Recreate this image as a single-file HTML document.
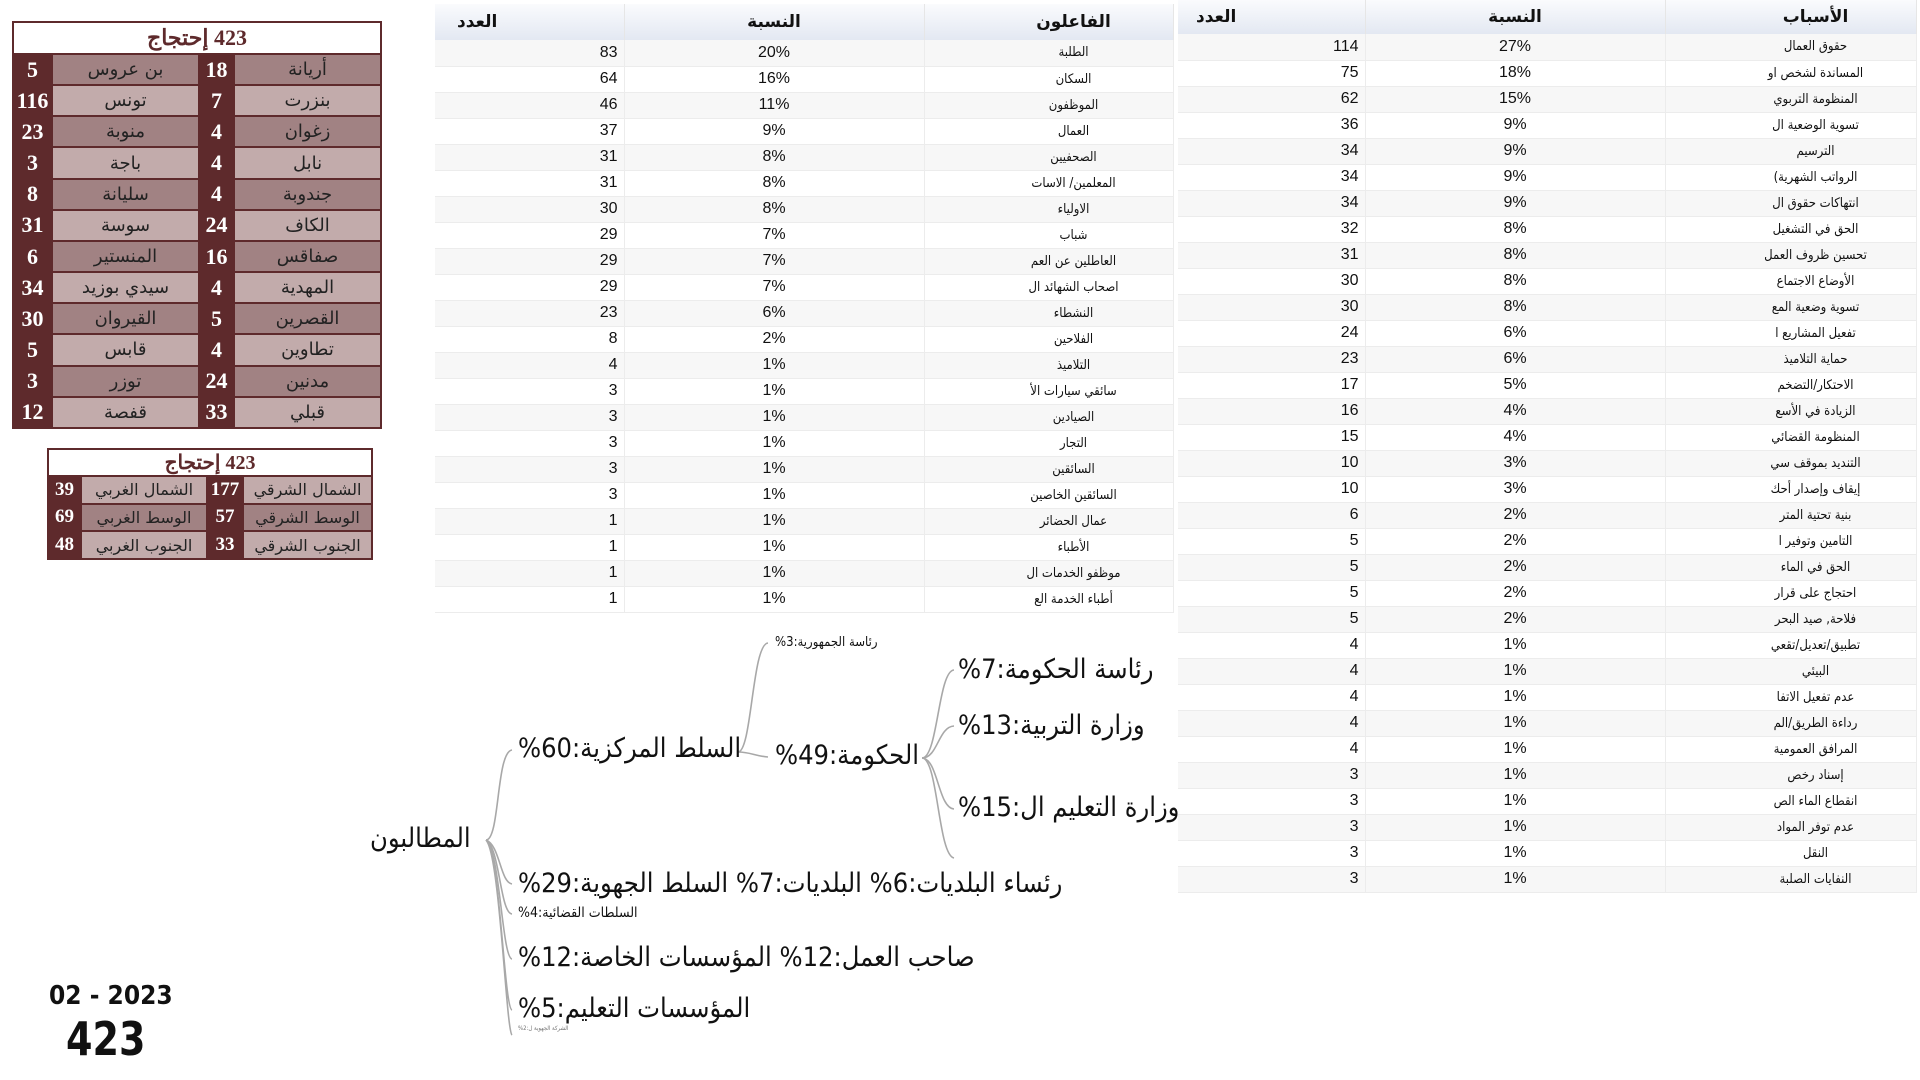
<!DOCTYPE html>
<html><head><meta charset="utf-8"><style>
*{margin:0;padding:0;box-sizing:border-box}
body{width:1920px;height:1080px;background:#fff;position:relative;overflow:hidden;font-family:"Liberation Sans","DejaVu Sans",sans-serif}
.abs{position:absolute}
table{border-collapse:collapse;table-layout:fixed;position:absolute}
.dt td{height:26px;border-bottom:1px solid #ececec;border-right:1px solid #ececec;font-size:15px;color:#111;white-space:nowrap;overflow:hidden}
.dt td.n{text-align:right;padding-right:6px;font-size:16px}
.dt td.p{text-align:center;font-size:16px}
.dt td.t{text-align:center;font-size:13px;font-family:"DejaVu Sans Condensed","DejaVu Sans",sans-serif;padding-left:50px}
.dt tr:nth-child(even) td{background:#f7f7f7}
.dt th{background:linear-gradient(#fafbfd,#e3e8f2);font-size:17px;font-weight:bold;color:#111;font-family:"DejaVu Sans",sans-serif;border-right:1px solid #e6e6e6}
.dt th.t{padding-left:50px}
.gt{background:#5e2a2c}
.gt td{border:2px solid #5e2a2c;font-family:"Liberation Serif","DejaVu Serif",serif;text-align:center;white-space:nowrap;overflow:hidden}
.gt td.n{color:#fff;font-weight:bold;font-size:22px}
.gt td.t{font-size:18px;color:#222;font-family:"DejaVu Sans",serif}
.gt tr.d td.t{background:#a18283}
.gt tr.l td.t{background:#c2abab}
.gt th{background:#fff;color:#5e2a2c;font-family:"Liberation Serif","DejaVu Serif",serif;font-size:22px;font-weight:bold;border:2px solid #5e2a2c}
.mm{position:absolute;font-family:"DejaVu Sans Condensed","DejaVu Sans",sans-serif;color:#111;white-space:nowrap;direction:rtl;line-height:1}
</style></head><body>

<table class="gt" style="left:12px;top:21px;width:368px;height:408px">
<colgroup><col style="width:39px"><col style="width:147px"><col style="width:35px"><col style="width:147px"></colgroup>
<tr style="height:32px"><th colspan="4" dir="rtl">423 إحتجاج</th></tr>
<tr class="d"><td class="n">5</td><td class="t">بن عروس</td><td class="n">18</td><td class="t">أريانة</td></tr>
<tr class="l"><td class="n">116</td><td class="t">تونس</td><td class="n">7</td><td class="t">بنزرت</td></tr>
<tr class="d"><td class="n">23</td><td class="t">منوبة</td><td class="n">4</td><td class="t">زغوان</td></tr>
<tr class="l"><td class="n">3</td><td class="t">باجة</td><td class="n">4</td><td class="t">نابل</td></tr>
<tr class="d"><td class="n">8</td><td class="t">سليانة</td><td class="n">4</td><td class="t">جندوبة</td></tr>
<tr class="l"><td class="n">31</td><td class="t">سوسة</td><td class="n">24</td><td class="t">الكاف</td></tr>
<tr class="d"><td class="n">6</td><td class="t">المنستير</td><td class="n">16</td><td class="t">صفاقس</td></tr>
<tr class="l"><td class="n">34</td><td class="t">سيدي بوزيد</td><td class="n">4</td><td class="t">المهدية</td></tr>
<tr class="d"><td class="n">30</td><td class="t">القيروان</td><td class="n">5</td><td class="t">القصرين</td></tr>
<tr class="l"><td class="n">5</td><td class="t">قابس</td><td class="n">4</td><td class="t">تطاوين</td></tr>
<tr class="d"><td class="n">3</td><td class="t">توزر</td><td class="n">24</td><td class="t">مدنين</td></tr>
<tr class="l"><td class="n">12</td><td class="t">قفصة</td><td class="n">33</td><td class="t">قبلي</td></tr>
</table>

<table class="gt" style="left:47px;top:448px;width:324px;height:112px">
<colgroup><col style="width:33px"><col style="width:126px"><col style="width:36px"><col style="width:129px"></colgroup>
<tr style="height:27px"><th colspan="4" dir="rtl" style="font-size:20px">423 إحتجاج</th></tr>
<tr class="l"><td class="n" style="font-size:19px">39</td><td class="t" style="font-size:16px">الشمال الغربي</td><td class="n" style="font-size:19px">177</td><td class="t" style="font-size:16px">الشمال الشرقي</td></tr>
<tr class="d"><td class="n" style="font-size:19px">69</td><td class="t" style="font-size:16px">الوسط الغربي</td><td class="n" style="font-size:19px">57</td><td class="t" style="font-size:16px">الوسط الشرقي</td></tr>
<tr class="l"><td class="n" style="font-size:19px">48</td><td class="t" style="font-size:16px">الجنوب الغربي</td><td class="n" style="font-size:19px">33</td><td class="t" style="font-size:16px">الجنوب الشرقي</td></tr>
</table>

<table class="dt" style="left:435px;top:4px;width:738px">
<colgroup><col style="width:189px"><col style="width:300px"><col style="width:249px"></colgroup>
<tr style="height:36px"><th style="text-align:left;padding-left:22px">العدد</th><th>النسبة</th><th class="t">الفاعلون</th></tr>
<tr><td class="n">83</td><td class="p">20%</td><td class="t">الطلبة</td></tr>
<tr><td class="n">64</td><td class="p">16%</td><td class="t">السكان</td></tr>
<tr><td class="n">46</td><td class="p">11%</td><td class="t">الموظفون</td></tr>
<tr><td class="n">37</td><td class="p">9%</td><td class="t">العمال</td></tr>
<tr><td class="n">31</td><td class="p">8%</td><td class="t">الصحفيين</td></tr>
<tr><td class="n">31</td><td class="p">8%</td><td class="t">المعلمين/ الاسات</td></tr>
<tr><td class="n">30</td><td class="p">8%</td><td class="t">الاولياء</td></tr>
<tr><td class="n">29</td><td class="p">7%</td><td class="t">شباب</td></tr>
<tr><td class="n">29</td><td class="p">7%</td><td class="t">العاطلين عن العم</td></tr>
<tr><td class="n">29</td><td class="p">7%</td><td class="t">اصحاب الشهائد ال</td></tr>
<tr><td class="n">23</td><td class="p">6%</td><td class="t">النشطاء</td></tr>
<tr><td class="n">8</td><td class="p">2%</td><td class="t">الفلاحين</td></tr>
<tr><td class="n">4</td><td class="p">1%</td><td class="t">التلاميذ</td></tr>
<tr><td class="n">3</td><td class="p">1%</td><td class="t">سائقي سيارات الأ</td></tr>
<tr><td class="n">3</td><td class="p">1%</td><td class="t">الصيادين</td></tr>
<tr><td class="n">3</td><td class="p">1%</td><td class="t">التجار</td></tr>
<tr><td class="n">3</td><td class="p">1%</td><td class="t">السائقين</td></tr>
<tr><td class="n">3</td><td class="p">1%</td><td class="t">السائقين الخاصين</td></tr>
<tr><td class="n">1</td><td class="p">1%</td><td class="t">عمال الحضائر</td></tr>
<tr><td class="n">1</td><td class="p">1%</td><td class="t">الأطباء</td></tr>
<tr><td class="n">1</td><td class="p">1%</td><td class="t">موظفو الخدمات ال</td></tr>
<tr><td class="n">1</td><td class="p">1%</td><td class="t">أطباء الخدمة الع</td></tr>
</table>

<table class="dt" style="left:1178px;top:0px;width:738px">
<colgroup><col style="width:187px"><col style="width:300px"><col style="width:251px"></colgroup>
<tr style="height:34px"><th style="text-align:left;padding-left:18px">العدد</th><th>النسبة</th><th class="t">الأسباب</th></tr>
<tr><td class="n">114</td><td class="p">27%</td><td class="t">حقوق العمال</td></tr>
<tr><td class="n">75</td><td class="p">18%</td><td class="t">المساندة لشخص او</td></tr>
<tr><td class="n">62</td><td class="p">15%</td><td class="t">المنظومة التربوي</td></tr>
<tr><td class="n">36</td><td class="p">9%</td><td class="t">تسوية الوضعية ال</td></tr>
<tr><td class="n">34</td><td class="p">9%</td><td class="t">الترسيم</td></tr>
<tr><td class="n">34</td><td class="p">9%</td><td class="t">(الرواتب الشهرية</td></tr>
<tr><td class="n">34</td><td class="p">9%</td><td class="t">انتهاكات حقوق ال</td></tr>
<tr><td class="n">32</td><td class="p">8%</td><td class="t">الحق في التشغيل</td></tr>
<tr><td class="n">31</td><td class="p">8%</td><td class="t">تحسين ظروف العمل</td></tr>
<tr><td class="n">30</td><td class="p">8%</td><td class="t">الأوضاع الاجتماع</td></tr>
<tr><td class="n">30</td><td class="p">8%</td><td class="t">تسوية وضعية المع</td></tr>
<tr><td class="n">24</td><td class="p">6%</td><td class="t">تفعيل المشاريع ا</td></tr>
<tr><td class="n">23</td><td class="p">6%</td><td class="t">حماية التلاميذ</td></tr>
<tr><td class="n">17</td><td class="p">5%</td><td class="t">الاحتكار/التضخم</td></tr>
<tr><td class="n">16</td><td class="p">4%</td><td class="t">الزيادة في الأسع</td></tr>
<tr><td class="n">15</td><td class="p">4%</td><td class="t">المنظومة القضائي</td></tr>
<tr><td class="n">10</td><td class="p">3%</td><td class="t">التنديد بموقف سي</td></tr>
<tr><td class="n">10</td><td class="p">3%</td><td class="t">إيقاف وإصدار أحك</td></tr>
<tr><td class="n">6</td><td class="p">2%</td><td class="t">بنية تحتية المتر</td></tr>
<tr><td class="n">5</td><td class="p">2%</td><td class="t">التامين وتوفير ا</td></tr>
<tr><td class="n">5</td><td class="p">2%</td><td class="t">الحق في الماء</td></tr>
<tr><td class="n">5</td><td class="p">2%</td><td class="t">احتجاج على قرار</td></tr>
<tr><td class="n">5</td><td class="p">2%</td><td class="t">فلاحة, صيد البحر</td></tr>
<tr><td class="n">4</td><td class="p">1%</td><td class="t">تطبيق/تعديل/تقعي</td></tr>
<tr><td class="n">4</td><td class="p">1%</td><td class="t">البيئي</td></tr>
<tr><td class="n">4</td><td class="p">1%</td><td class="t">عدم تفعيل الاتفا</td></tr>
<tr><td class="n">4</td><td class="p">1%</td><td class="t">رداءة الطريق/الم</td></tr>
<tr><td class="n">4</td><td class="p">1%</td><td class="t">المرافق العمومية</td></tr>
<tr><td class="n">3</td><td class="p">1%</td><td class="t">إسناد رخص</td></tr>
<tr><td class="n">3</td><td class="p">1%</td><td class="t">انقطاع الماء الص</td></tr>
<tr><td class="n">3</td><td class="p">1%</td><td class="t">عدم توفر المواد</td></tr>
<tr><td class="n">3</td><td class="p">1%</td><td class="t">النقل</td></tr>
<tr><td class="n">3</td><td class="p">1%</td><td class="t">النفايات الصلبة</td></tr>
</table>

<svg class="abs" style="left:0;top:0" width="1920" height="1080">
<g fill="none" stroke="#a8a8a8" stroke-width="1.6">
<path d="M486 840 C500 840 496 752 512 750"/>
<path d="M486 840 C500 845 500 882 512 884"/>
<path d="M486 840 C500 848 500 913 512 914"/>
<path d="M486 840 C500 850 502 958 512 959"/>
<path d="M486 840 C500 852 504 1008 512 1010"/>
<path d="M486 840 C500 855 506 1030 512 1035"/>
<path d="M738 752 C752 752 752 644 768 643"/>
<path d="M738 752 C750 752 755 756 768 757"/>
<path d="M922 758 C938 758 938 671 954 670"/>
<path d="M922 758 C938 758 938 727 954 726"/>
<path d="M922 758 C938 758 938 808 954 809"/>
<path d="M922 758 C938 758 938 855 954 858"/>
</g></svg>

<div class="mm" style="left:775px;top:636px;font-size:13px">رئاسة الجمهورية:3%</div>
<div class="mm" style="left:958px;top:656px;font-size:27px">رئاسة الحكومة:7%</div>
<div class="mm" style="left:958px;top:712px;font-size:27px">وزارة التربية:13%</div>
<div class="mm" style="left:958px;top:794px;font-size:27px">وزارة التعليم ال:15%</div>
<div class="mm" style="left:775px;top:742px;font-size:27px">الحكومة:49%</div>
<div class="mm" style="left:518px;top:735px;font-size:27px">السلط المركزية:60%</div>
<div class="mm" style="left:370px;top:825px;font-size:27px">المطالبون</div>
<div class="mm" style="left:518px;top:870px;font-size:27px">رئساء البلديات:6% البلديات:7% السلط الجهوية:29%</div>
<div class="mm" style="left:518px;top:906px;font-size:14px">السلطات القضائية:4%</div>
<div class="mm" style="left:518px;top:944px;font-size:27px">صاحب العمل:12% المؤسسات الخاصة:12%</div>
<div class="mm" style="left:518px;top:995px;font-size:27px">المؤسسات التعليم:5%</div>
<div class="mm" style="left:518px;top:1026px;font-size:6px;color:#777">الشركة الجهوية ل:2%</div>

<div class="abs" style="left:49px;top:983px;font-family:'DejaVu Sans Condensed','DejaVu Sans',sans-serif;font-weight:bold;font-size:26px;line-height:1;color:#111">02 - 2023</div>
<div class="abs" style="left:66px;top:1016px;font-family:'DejaVu Sans Condensed','DejaVu Sans',sans-serif;font-weight:bold;font-size:46px;line-height:1;color:#111;transform:scaleX(0.92);transform-origin:left">423</div>
</body></html>
